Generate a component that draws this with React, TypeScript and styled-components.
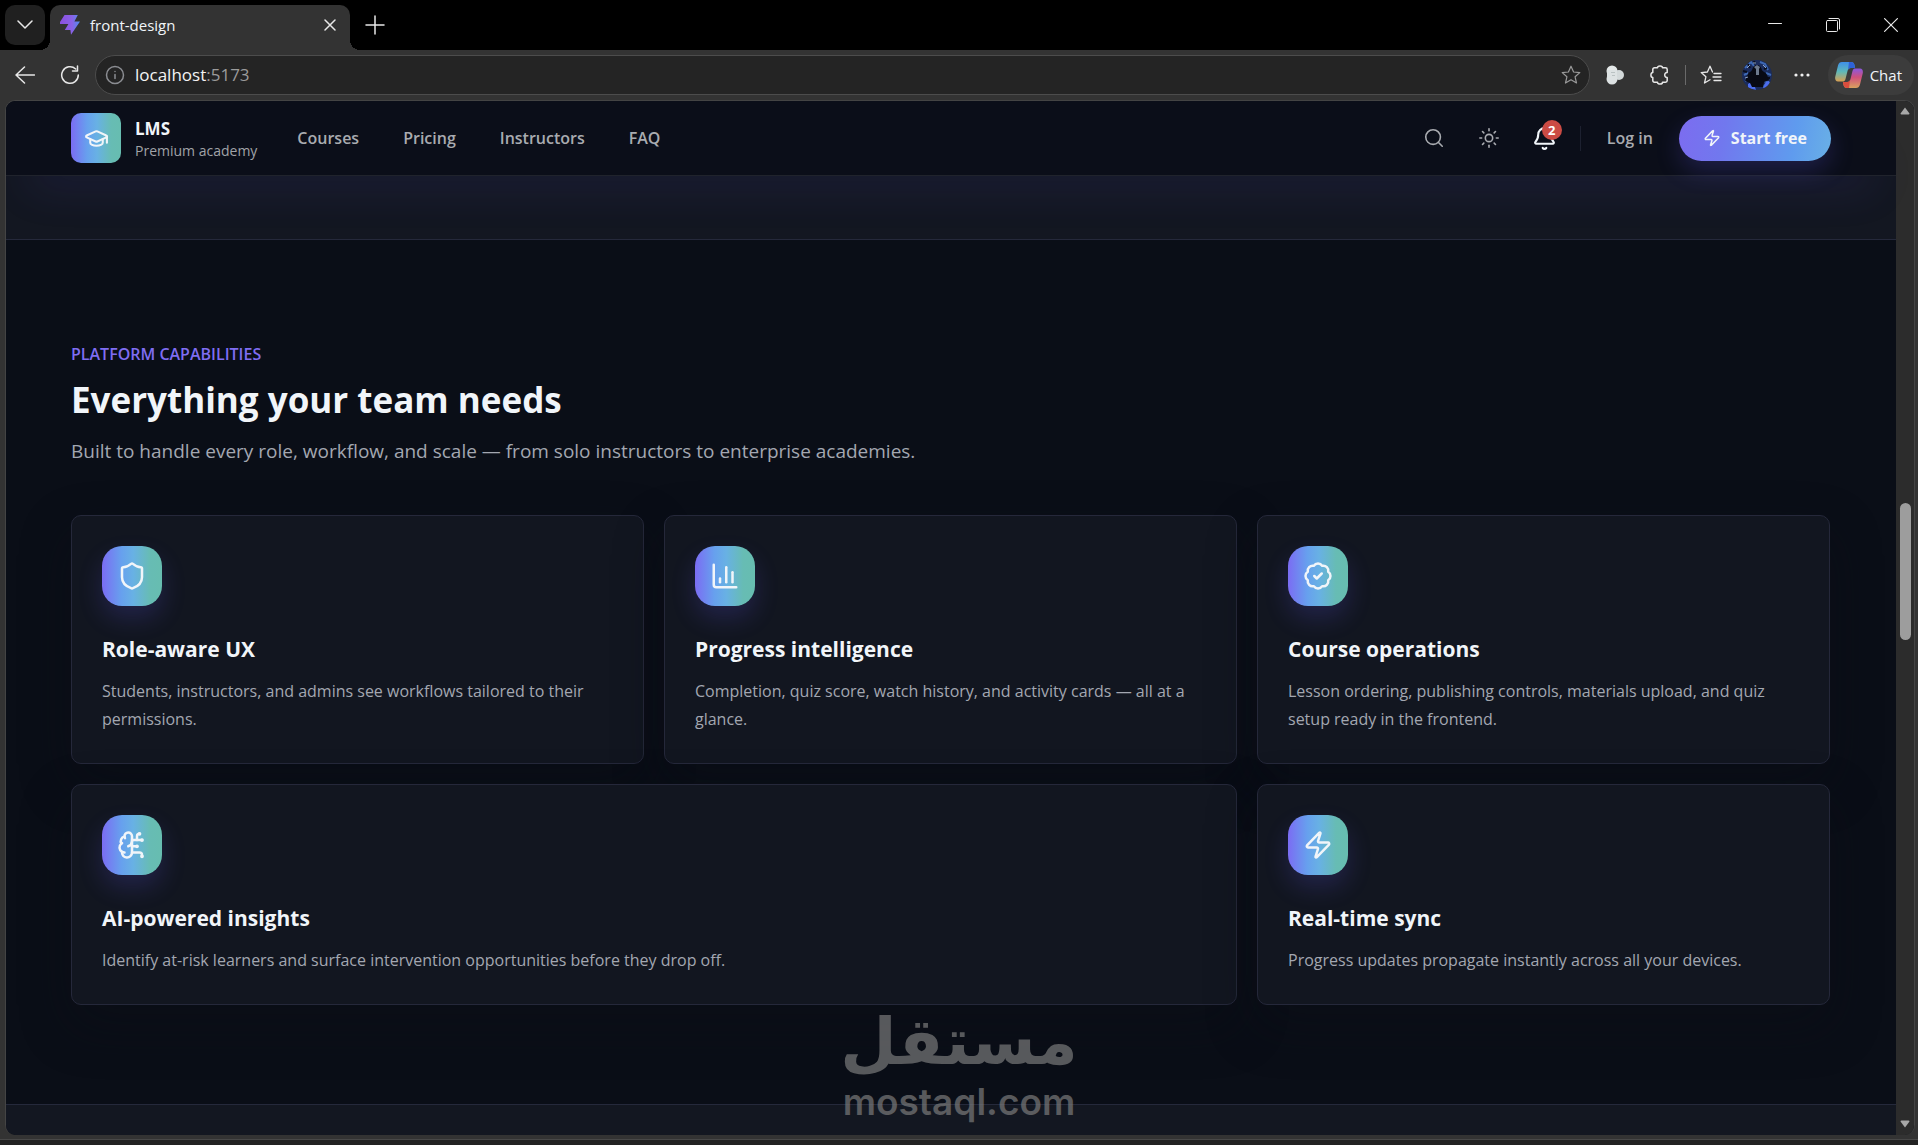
import React from "react";
import styled, { createGlobalStyle, css } from "styled-components";
import {
  BadgeCheck,
  Bell,
  BrainCircuit,
  ChartColumn,
  GraduationCap,
  Search,
  Shield,
  Sun,
  Zap,
} from "lucide-react";
import type { LucideIcon } from "lucide-react";

const font = `"Segoe UI", "Open Sans", "Noto Sans", sans-serif`;
const brandGradient = "linear-gradient(90deg, #7b6cf3 0%, #67a0ee 32%, #68b1e4 52%, #67bcb4 80%, #67bdb0 100%)";

const GlobalStyle = createGlobalStyle`
  *, *::before, *::after { box-sizing: border-box; }
  body { margin: 0; background: #333333; font-family: ${font}; color: #f1f5f9; }
  button, input { font: inherit; color: inherit; }
  button { margin: 0; padding: 0; border: 0; background: none; cursor: pointer; }
  a { color: inherit; text-decoration: none; }
  h1, h2, h3, p, ul { margin: 0; padding: 0; }
  svg { display: block; flex: none; }
`;

const Window = styled.div`
  position: relative;
  display: flex;
  flex-direction: column;
  min-height: 100vh;
`;

/* ---------- browser frame ---------- */

const center = css`
  display: flex;
  align-items: center;
  justify-content: center;
`;

const TabStrip = styled.div`
  display: flex;
  height: 50px;
  padding: 5px 0 0 5px;
  background: #000000;
  overflow: hidden;
`;

const TabMenuButton = styled.button`
  ${center}
  width: 40px;
  height: 40px;
  margin-right: 5px;
  border-radius: 10px;
  background: #202020;
`;

const Tab = styled.div`
  position: relative;
  display: flex;
  align-items: center;
  gap: 10px;
  width: 300px;
  height: 45px;
  padding: 0 10px 5px;
  border-radius: 10px 10px 0 0;
  background: #333333;
  font-size: 15px;
  line-height: 20px;

  &::before,
  &::after {
    content: "";
    position: absolute;
    bottom: 0;
    width: 10px;
    height: 10px;
  }
  &::before {
    left: -10px;
    background: radial-gradient(circle at 0 0, transparent 10px, #333333 10px);
  }
  &::after {
    right: -10px;
    background: radial-gradient(circle at 100% 0, transparent 10px, #333333 10px);
  }
`;

const TabTitle = styled.span`
  flex: 1;
`;

const FrameButton = styled.button<{ $width?: number }>`
  ${center}
  width: ${(p) => p.$width ?? 20}px;
  height: 40px;
`;

const WindowControls = styled.div`
  display: flex;
  margin: 0 -2px 0 auto;
`;

const Toolbar = styled.div`
  display: flex;
  align-items: center;
  height: 50px;
  padding: 5px 4px 5px 5px;
  background: #333333;
`;

const AddressBar = styled.div`
  display: flex;
  flex: 1;
  align-items: center;
  gap: 10px;
  height: 40px;
  margin-right: 5px;
  padding: 0 8px 0 9px;
  border: 1px solid #4c4c4c;
  border-radius: 20px;
  background: #242424;
`;

const Address = styled.span`
  flex: 1;
  color: #9b9b9b;
  font-size: 17px;
  line-height: 24px;

  b {
    color: #f4f4f4;
    font-weight: 400;
  }
`;

const Separator = styled.span<{ $height: number; $color: string }>`
  width: 1px;
  height: ${(p) => p.$height}px;
  background: ${(p) => p.$color};
`;

const ChatButton = styled.button`
  display: flex;
  align-items: center;
  gap: 7px;
  height: 40px;
  padding: 0 12px 0 7px;
  border-radius: 20px;
  background: #3c3c3c;
  font-size: 15px;
`;

const Frame = styled.div`
  display: flex;
  flex: 1;
  margin: 0 3px 0 5px;
  border: 1px solid #444444;
  border-bottom: 0;
  border-radius: 10px;
  overflow: hidden;
  background: #0a0e17;
`;

const FrameBottom = styled.div`
  height: 10px;
  border-bottom: 5px solid #222222;
  background: linear-gradient(#333333 4px, #484848 4px);
`;

const ScrollTrack = styled.div`
  display: flex;
  flex-direction: column;
  align-items: center;
  justify-content: space-between;
  width: 18px;
  padding: 6px 0 7px;
  background: #2c2c2c;
`;

const ScrollThumb = styled.div`
  width: 11px;
  height: 137px;
  margin-bottom: 93px;
  border-radius: 6px;
  background: #9d9d9d;
`;

/* ---------- site ---------- */

const Page = styled.div`
  display: flex;
  flex: 1;
  flex-direction: column;
  min-width: 0;
`;

const Header = styled.header`
  position: relative;
  z-index: 1;
  padding: 12px 65px;
  border-bottom: 1px solid #20232c;
  background: #0b0e19;
  box-shadow: 0 34px 44px -22px rgba(90, 80, 220, 0.13);
`;

const HeaderInner = styled.div`
  display: flex;
  align-items: center;
  height: 50px;
`;

const Brand = styled.a`
  display: flex;
  align-items: center;
  gap: 14px;
`;

const BrandMark = styled.span`
  ${center}
  width: 50px;
  height: 50px;
  border-radius: 10px;
  background: ${brandGradient};
  color: #f1f5f9;
`;

const BrandText = styled.span`
  display: flex;
  flex-direction: column;
  padding-top: 4px;
  color: #a1a3a8;
  font-size: 14px;
  line-height: 22px;

  strong {
    color: #f1f5f9;
    font-size: 17px;
    font-weight: 700;
  }
`;

const Nav = styled.nav`
  display: flex;
  gap: 44px;
  margin-left: 40px;
  color: #a9abb0;
  font-size: 16px;
  font-weight: 600;
  line-height: 26px;
`;

const Actions = styled.div`
  display: flex;
  align-items: center;
  margin-left: auto;
  color: #a9abb0;
`;

const IconButton = styled.button<{ $bright?: boolean }>`
  ${center}
  position: relative;
  width: 55px;
  height: 45px;
  color: ${(p) => (p.$bright ? "#f1f5f9" : "#a9abb0")};
`;

const Badge = styled.span`
  ${center}
  position: absolute;
  top: 4px;
  right: 10px;
  width: 20px;
  height: 20px;
  border-radius: 50%;
  background: #cb4b44;
  color: #ffffff;
  font-size: 13px;
  font-weight: 700;
`;

const LoginGroup = styled.div`
  display: flex;
  align-items: center;
  margin-left: 8px;
`;

const LoginLink = styled.a`
  padding: 0 26px;
  font-size: 16px;
  font-weight: 600;
  line-height: 26px;
`;

const StartButton = styled.button`
  display: flex;
  align-items: center;
  gap: 10px;
  height: 45px;
  padding: 0 24px;
  border-radius: 23px;
  background: linear-gradient(100deg, #7c6cf0 0%, #7178ee 30%, #5f9bee 75%, #69b0e6 100%);
  box-shadow: 0 10px 24px rgba(100, 90, 240, 0.22);
  color: #f1f5f9;
  font-size: 16px;
  font-weight: 700;
`;

const Band = styled.div<{ $grow?: boolean }>`
  flex: ${(p) => (p.$grow ? "1" : "none")};
  height: ${(p) => (p.$grow ? "auto" : "64px")};
  border: 0 solid #25293b;
  border-width: ${(p) => (p.$grow ? "1px 0 0" : "0 0 1px")};
  background: #131721;
`;

const Section = styled.section`
  padding: 100px 66px 99px 65px;
  background: #0a0e17;
`;

const Eyebrow = styled.p`
  color: #7f6df2;
  font-size: 16px;
  font-weight: 600;
  line-height: 28px;
  text-transform: uppercase;
`;

const Title = styled.h2`
  margin: 10px 0 14px;
  font-size: 35px;
  font-weight: 700;
  line-height: 44px;
`;

const Lead = styled.p`
  color: #a3a7b1;
  font-size: 19px;
  line-height: 30px;
`;

const Grid = styled.div`
  display: grid;
  grid-template-columns: repeat(3, minmax(0, 1fr));
  gap: 20px;
  margin-top: 49px;
`;

const Card = styled.article<{ $span: number }>`
  grid-column: span ${(p) => p.$span};
  padding: 30px;
  border: 1px solid #25283a;
  border-radius: 10px;
  background: #121620;
  box-shadow: 0 20px 50px rgba(12, 16, 22, 0.4);
`;

const CardIcon = styled.div`
  ${center}
  width: 60px;
  height: 60px;
  border-radius: 20px;
  background: ${brandGradient};
  box-shadow: 0 12px 24px rgba(100, 90, 240, 0.2);
  color: #f1f5f9;
`;

const CardTitle = styled.h3`
  margin: 26px 0 11px;
  font-size: 21px;
  font-weight: 700;
  line-height: 34px;
`;

const CardText = styled.p`
  color: #a3a7b1;
  font-size: 16px;
  line-height: 28px;
`;

const Watermark = styled.div`
  position: absolute;
  bottom: 21px;
  left: 50%;
  display: flex;
  flex-direction: column;
  align-items: center;
  transform: translateX(-50%);
  color: #7d7d7d;
  opacity: 0.68;
  pointer-events: none;
`;

const WatermarkArabic = styled.span`
  font-family: "DejaVu Sans", sans-serif;
  font-size: 65px;
  font-weight: 700;
  line-height: 74px;
`;

const WatermarkLatin = styled.span`
  font-family: Inter, sans-serif;
  font-size: 37px;
  font-weight: 600;
  line-height: 45px;
`;

/* ---------- drawings ---------- */

const stroke = {
  fill: "none",
  stroke: "#e8e8e8",
  strokeWidth: 1.5,
  strokeLinecap: "round" as const,
  strokeLinejoin: "round" as const,
};

const Favicon = () => (
  <svg width="20" height="20" viewBox="0 0 20 20">
    <defs>
      <linearGradient id="bolt" x1="0" x2="1">
        <stop offset="0" stopColor="#8a4fe0" />
        <stop offset="0.6" stopColor="#8a62e6" />
        <stop offset="1" stopColor="#4f8df0" />
      </linearGradient>
    </defs>
    <path fill="url(#bolt)" d="M4.500 0H17.800L14.400 6.600H20L11 19.800 10.400 15H4.800L8.400 9H0V7Z" />
  </svg>
);

const Copilot = () => (
  <svg width="28" height="28" viewBox="0 0 28 28">
    <defs>
      <linearGradient id="cpa" x1="0" y1="0" x2="0" y2="1">
        <stop offset="0" stopColor="#3f8fe8" />
        <stop offset="0.5" stopColor="#5fb9b8" />
        <stop offset="1" stopColor="#d9a052" />
      </linearGradient>
      <linearGradient id="cpb" x1="0" y1="0" x2="0" y2="1">
        <stop offset="0" stopColor="#8a58e0" />
        <stop offset="0.45" stopColor="#d0507c" />
        <stop offset="1" stopColor="#d8a25e" />
      </linearGradient>
    </defs>
    <path fill="url(#cpa)" d="M7 1h9c2 0 3 1 3.500 3l.5 3h-4c-2 0-3 1-3.500 3l-2 8c-.5 2-1.500 2.500-3 2.500H3C.5 20.500-.3 18 .3 15.500L3 4.500C3.600 2 5 1 7 1Z" />
    <path fill="#2e62d8" d="M14 1h2c2 0 3 1 3.500 3l.5 3h-4c-1.600 0-2.300.6-3 2Z" />
    <path fill="url(#cpb)" d="M21 27h-9c-2 0-3-1-3.500-3L8 21h4c2 0 3-1 3.500-3l2-8c.5-2 1.500-2.500 3-2.500H25c2.500 0 3.300 2.500 2.700 5L25 23.500c-.6 2.500-2 3.500-4 3.500Z" />
    <path fill="#d94d3d" d="M14 27h-2c-2 0-3-1-3.500-3L8 21h4c1.600 0 2.300-.6 3-2Z" />
  </svg>
);

const Avatar = () => (
  <svg width="30" height="30" viewBox="0 0 30 30">
    <defs>
      <clipPath id="face">
        <circle cx="15" cy="15" r="15" />
      </clipPath>
    </defs>
    <g clipPath="url(#face)">
      <rect width="30" height="30" fill="#1b2c5c" />
      <path d="M3 8 9 2l3 4M18 2l5 2 3 6M2 15l4-2M24 13l5 2M3 21l6-2M22 21l6 2M21 27l4-4" stroke="#3d68b4" strokeWidth="2" fill="none" />
      <path d="M6 4 8 8M12 1l1 3M25 8l-3 1M28 18h-4M1 11l4 1" stroke="#0a0e1c" strokeWidth="2" />
      <path d="M6 29v-5l5-3 3 9ZM21 28l3-6 3-1v6Z" fill="#4c6df0" />
      <path d="M6 14c1-2 3-2 4-4 1-3 2-5 5-5s4 2 5 5c1 2 4 2 5 5l2 5-5 2-1 5H10l-2-4-5-2Z" fill="#080a14" />
      <path d="m12 7 3-2 3 2-1 2v6h-3V9Z" fill="#6d7a8e" />
      <path d="M5 8 8 5M21 5l3 3M3 18l3-1M11 3h3" stroke="#8ea4c8" strokeWidth="1" />
    </g>
  </svg>
);

const starPath = "M10 1.200 12.600 7l6.200.6-4.700 4.200 1.400 6.200L10 14.800 4.500 18l1.400-6.200L1.200 7.600 7.400 7Z";

type Feature = { title: string; text: string; icon: LucideIcon; span: number };

const features: Feature[] = [
  {
    title: "Role-aware UX",
    text: "Students, instructors, and admins see workflows tailored to their permissions.",
    icon: Shield,
    span: 1,
  },
  {
    title: "Progress intelligence",
    text: "Completion, quiz score, watch history, and activity cards — all at a glance.",
    icon: ChartColumn,
    span: 1,
  },
  {
    title: "Course operations",
    text: "Lesson ordering, publishing controls, materials upload, and quiz setup ready in the frontend.",
    icon: BadgeCheck,
    span: 1,
  },
  {
    title: "AI-powered insights",
    text: "Identify at-risk learners and surface intervention opportunities before they drop off.",
    icon: BrainCircuit,
    span: 2,
  },
  {
    title: "Real-time sync",
    text: "Progress updates propagate instantly across all your devices.",
    icon: Zap,
    span: 1,
  },
];

const BrowserTabs = () => (
  <TabStrip>
    <TabMenuButton aria-label="Tab actions">
      <svg width="16" height="10" viewBox="0 0 16 10" {...stroke}>
        <path d="m1 1 7 7 7-7" />
      </svg>
    </TabMenuButton>
    <Tab>
      <Favicon />
      <TabTitle>front-design</TabTitle>
      <FrameButton aria-label="Close tab">
        <svg width="12" height="12" viewBox="0 0 12 12" {...stroke}>
          <path d="m1 1 10 10M11 1 1 11" />
        </svg>
      </FrameButton>
    </Tab>
    <FrameButton $width={50} aria-label="New tab">
      <svg width="20" height="20" viewBox="0 0 20 20" {...stroke}>
        <path d="M10 1v18M1 10h18" />
      </svg>
    </FrameButton>
    <WindowControls>
      <FrameButton $width={58} aria-label="Minimize">
        <svg width="14" height="14" viewBox="0 0 14 14" {...stroke} strokeWidth={1}>
          <path d="M.5 5.500h13" />
        </svg>
      </FrameButton>
      <FrameButton $width={58} aria-label="Restore">
        <svg width="14" height="14" viewBox="0 0 14 14" {...stroke} strokeWidth={1}>
          <rect x=".5" y="2.500" width="11" height="11" rx="1" />
          <path d="M3 .5h9q1.500 0 1.500 1.500v9" />
        </svg>
      </FrameButton>
      <FrameButton $width={58} aria-label="Close">
        <svg width="14" height="14" viewBox="0 0 14 14" {...stroke} strokeWidth={1.2}>
          <path d="m.6.6 12.800 12.800M13.400.6.6 13.400" />
        </svg>
      </FrameButton>
    </WindowControls>
  </TabStrip>
);

const BrowserToolbar = () => (
  <Toolbar>
    <FrameButton $width={40} aria-label="Back">
      <svg width="20" height="18" viewBox="0 0 20 18" {...stroke}>
        <path d="M9.500 1 1 9l8.500 8M1 9h18.500" />
      </svg>
    </FrameButton>
    <FrameButton $width={50} aria-label="Reload">
      <svg width="20" height="20" viewBox="0 0 20 20" {...stroke}>
        <path d="M18.300 10a8.300 8.300 0 1 1-2.600-6M17.500 1v5h-5" />
      </svg>
    </FrameButton>
    <AddressBar>
      <FrameButton aria-label="Site information">
        <svg width="20" height="20" viewBox="0 0 20 20" {...stroke} stroke="#8b8d92">
          <circle cx="10" cy="10" r="8.500" />
          <path d="M10 9.500v4M10 6.500v.1" />
        </svg>
      </FrameButton>
      <Address>
        <b>localhost</b>:5173
      </Address>
      <FrameButton aria-label="Add to favorites">
        <svg width="20" height="20" viewBox="0 0 20 20" {...stroke} stroke="#9a9a9a" strokeWidth={1.2}>
          <path d={starPath} />
        </svg>
      </FrameButton>
    </AddressBar>
    <FrameButton $width={40} aria-label="Extension">
      <svg width="20" height="20" viewBox="0 0 20 20">
        <circle cx="7" cy="6" r="5.500" fill="#e4e9e9" />
        <circle cx="14" cy="10" r="5" fill="#d3d9da" />
        <circle cx="7" cy="14" r="5.500" fill="#dde2e3" />
        <path d="M2 5h10v9H2Z" fill="#dde2e3" />
        <path d="M6 7.500h4M7 10.500h3" stroke="#bac2c3" />
      </svg>
    </FrameButton>
    <FrameButton $width={50} aria-label="Extensions">
      <svg width="20" height="20" viewBox="0 0 20 20" {...stroke}>
        <path d="M4.500 2.800h3C7.500.3 12.500.3 12.500 2.800h3q1.700 0 1.700 1.700v3c-3.300-.5-3.300 5.500 0 5v3q0 1.700-1.700 1.700h-3c0 2.500-5 2.500-5 0h-3q-1.700 0-1.700-1.700v-3c-2.500 0-2.500-5 0-5v-3q0-1.700 1.700-1.700Z" />
      </svg>
    </FrameButton>
    <Separator $height={20} $color="#6a6a6a" />
    <FrameButton $width={51} aria-label="Favorites">
      <svg width="22" height="20" viewBox="0 0 22 20" {...stroke} strokeWidth={1.3}>
        <path d="M12.500 7 10 1.200 7.400 7l-6.200.6 4.700 4.200L4.500 18l5.500-3.200M14 8.500h7M13 12h8M14 15.500h7" />
      </svg>
    </FrameButton>
    <FrameButton $width={40} aria-label="Profile">
      <Avatar />
    </FrameButton>
    <FrameButton $width={51} aria-label="Settings and more">
      <svg width="16" height="4" viewBox="0 0 16 4" fill="#f0f0f0">
        <circle cx="2" cy="2" r="1.600" />
        <circle cx="8" cy="2" r="1.600" />
        <circle cx="14" cy="2" r="1.600" />
      </svg>
    </FrameButton>
    <ChatButton>
      <Copilot />
      Chat
    </ChatButton>
  </Toolbar>
);

const SiteHeader = () => (
  <Header>
    <HeaderInner>
      <Brand href="#">
        <BrandMark>
          <GraduationCap size={25} />
        </BrandMark>
        <BrandText>
          <strong>LMS</strong>
          Premium academy
        </BrandText>
      </Brand>
      <Nav>
        <a href="#courses">Courses</a>
        <a href="#pricing">Pricing</a>
        <a href="#instructors">Instructors</a>
        <a href="#faq">FAQ</a>
      </Nav>
      <Actions>
        <IconButton aria-label="Search">
          <Search size={22} strokeWidth={1.75} />
        </IconButton>
        <IconButton aria-label="Toggle theme">
          <Sun size={22} strokeWidth={1.75} />
        </IconButton>
        <IconButton aria-label="Notifications" $bright>
          <Bell size={25} />
          <Badge>2</Badge>
        </IconButton>
        <LoginGroup>
          <Separator $height={25} $color="#1d2130" />
          <LoginLink href="#login">Log in</LoginLink>
        </LoginGroup>
        <StartButton>
          <Zap size={18} />
          Start free
        </StartButton>
      </Actions>
    </HeaderInner>
  </Header>
);

export default function App() {
  return (
    <Window>
      <GlobalStyle />
      <BrowserTabs />
      <BrowserToolbar />
      <Frame>
        <Page>
          <SiteHeader />
          <Band />
          <Section>
            <Eyebrow>Platform capabilities</Eyebrow>
            <Title>Everything your team needs</Title>
            <Lead>Built to handle every role, workflow, and scale — from solo instructors to enterprise academies.</Lead>
            <Grid>
              {features.map(({ title, text, icon: Icon, span }) => (
                <Card key={title} $span={span}>
                  <CardIcon>
                    <Icon size={30} />
                  </CardIcon>
                  <CardTitle>{title}</CardTitle>
                  <CardText>{text}</CardText>
                </Card>
              ))}
            </Grid>
          </Section>
          <Band $grow />
        </Page>
        <ScrollTrack>
          <svg width="10" height="8" viewBox="0 0 10 8" fill="#a8a8a8">
            <path d="M5 .5 9.500 6.500q0 1-1 1h-7q-1 0-1-1Z" />
          </svg>
          <ScrollThumb />
          <svg width="10" height="8" viewBox="0 0 10 8" fill="#a8a8a8">
            <path d="M5 7.500.5 1.500q0-1 1-1h7q1 0 1 1Z" />
          </svg>
        </ScrollTrack>
      </Frame>
      <FrameBottom />
      <Watermark>
        <WatermarkArabic lang="ar">مستقل</WatermarkArabic>
        <WatermarkLatin>mostaql.com</WatermarkLatin>
      </Watermark>
    </Window>
  );
}
